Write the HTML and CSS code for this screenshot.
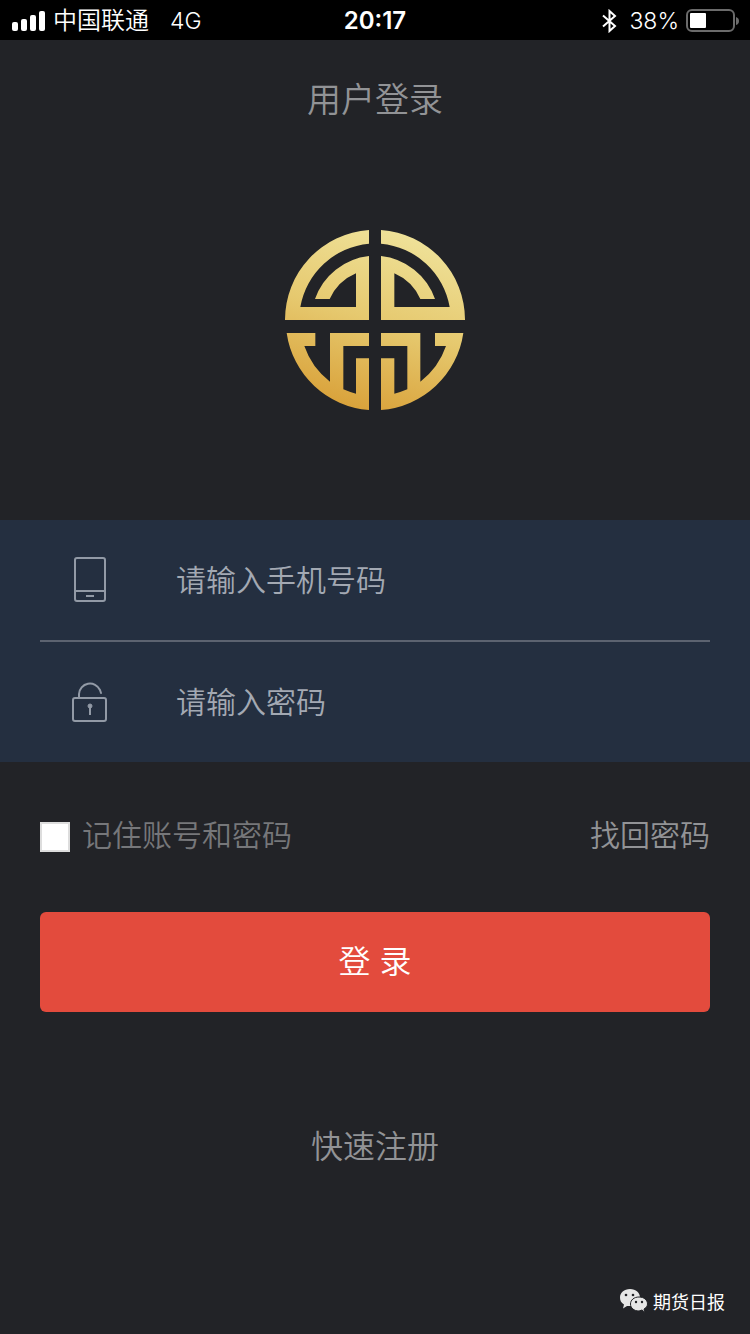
FILE: index.html
```html
<!DOCTYPE html>
<html lang="zh-CN">
<head>
    <meta charset="UTF-8">
    <meta name="viewport" content="width=device-width, initial-scale=1.0">
    <title>用户登录</title>
    <link rel="stylesheet" href="styles.css">
</head>
<body>
    <div class="status-bar">
        <div class="status-left">
            <svg viewBox="0 0 34 20" width="34" height="20" fill="#fff">
                <rect x="0" y="11" width="6" height="9" rx="2"/>
                <rect x="9" y="8" width="6" height="12" rx="2"/>
                <rect x="18" y="4" width="6" height="16" rx="2"/>
                <rect x="27" y="0" width="6" height="20" rx="2"/>
            </svg>
            <span>中国联通</span>
            <span class="network">4G</span>
        </div>
        <div class="time">20:17</div>
        <div class="status-right">
            <svg viewBox="0 0 16 24" width="16" height="24" fill="none" stroke="#fff" stroke-width="2">
                <path d="M2 6.500l12 10.500-5.500 5V2l5.500 5L2 17.500"/>
            </svg>
            <span class="percent">38%</span>
            <svg viewBox="0 0 54 24" width="54" height="24">
                <rect x="1" y="1" width="47" height="21" rx="5" fill="none" stroke="#6b6b6b" stroke-width="2"/>
                <rect x="4" y="4" width="16" height="15" rx="1" fill="#fff"/>
                <path d="M50 8q3 1 3 4t-3 4z" fill="#6b6b6b"/>
            </svg>
        </div>
    </div>
    <h1 class="title">用户登录</h1>
    <div class="logo">
        <svg viewBox="0 0 540 540" width="180" height="180">
            <defs>
                <linearGradient id="gold" gradientUnits="userSpaceOnUse" x1="350" y1="0" x2="190" y2="540">
                    <stop offset="0" stop-color="#efe29a"/>
                    <stop offset="0.5" stop-color="#e6c96f"/>
                    <stop offset="1" stop-color="#d9a139"/>
                </linearGradient>
            </defs>
            <g fill="url(#gold)">
                <path d="M0 270A270 270 0 0 1 252 0V41A230 230 0 0 0 46 231H213V130A152 152 0 0 0 134 207H90A194 194 0 0 1 252 78V270Z"/>
                <path d="M540 270A270 270 0 0 0 288 0V41A230 230 0 0 1 494 231H328V130A152 152 0 0 1 406 207H450A194 194 0 0 0 288 78V270Z"/>
                <path d="M5 309H91V348H58A228 228 0 0 0 135 455V309H252V348H175V478A228 228 0 0 0 213 491V385H252V540A270 270 0 0 1 5 309Z"/>
                <path d="M535 309H450V348H483A228 228 0 0 1 406 455V309H288V348H367V478A228 228 0 0 1 328 491V385H288V540A270 270 0 0 0 535 309Z"/>
            </g>
        </svg>
    </div>
    <form>
        <div class="fields">
            <div class="field">
                <label for="phone" aria-label="手机号码">
                    <svg viewBox="0 0 36 46" width="36" height="46" fill="none" stroke="#929aa6" stroke-width="2">
                        <rect x="3" y="1" width="30" height="43" rx="2"/>
                        <path d="M3 34h30M14 39h8"/>
                    </svg>
                </label>
                <input type="tel" id="phone" placeholder="请输入手机号码">
            </div>
            <div class="field">
                <label for="password" aria-label="密码">
                    <svg viewBox="0 0 36 46" width="36" height="46" fill="none" stroke="#929aa6" stroke-width="2">
                        <rect x="1" y="19" width="33" height="23" rx="2"/>
                        <path d="M7 19v-4a11 11 0 0 1 21 -4l1 3" stroke-linecap="round"/>
                        <circle cx="18" cy="27" r="2" fill="#929aa6" stroke-width="1"/>
                        <path d="M18 27v9"/>
                    </svg>
                </label>
                <input type="password" id="password" placeholder="请输入密码">
            </div>
        </div>
        <div class="options">
            <input type="checkbox" id="remember">
            <label for="remember">记住账号和密码</label>
            <a href="#">找回密码</a>
        </div>
        <button type="button">登 录</button>
    </form>
    <a class="register" href="#">快速注册</a>
    <div class="account">
        <svg viewBox="0 0 28 24" width="28" height="24">
            <path d="M10 0C4 0 0 4 0 8.500c0 3 1 5 4 7l-1 4 4-2.500h3c6 0 10-4 10-8.500S16 0 10 0Z" fill="#e6e6e6"/>
            <path d="M19 8c-5 0-8.500 3-8.500 7s3.500 7 8.500 7l3-1 3 2.500-1-3.500c2-1 3.500-3 3.500-5 0-4-3.500-7-8.500-7Z" fill="#e6e6e6" stroke="#222327"/>
            <g fill="#222327">
                <circle cx="6" cy="6" r="1.300"/>
                <circle cx="13" cy="6" r="1.300"/>
                <circle cx="16" cy="13" r="1.200"/>
                <circle cx="22" cy="13" r="1.200"/>
            </g>
        </svg>
        <span>期货日报</span>
    </div>
</body>
</html>
```
FILE: styles.css
```css
* {
    box-sizing: border-box;
}
body {
    font-family: Inter, "Noto Sans CJK SC", sans-serif;
    font-weight: 350;
    margin: 0;
    min-height: 100vh;
    display: flex;
    flex-direction: column;
    background-color: #222327;
    color: #929396;
}
svg {
    display: block;
}
a {
    color: #929396;
    text-decoration: none;
}
.status-bar {
    display: grid;
    grid-template-columns: 1fr auto 1fr;
    align-items: center;
    height: 40px;
    padding: 0 10px;
    background-color: #000;
    color: #fff;
    font-size: 24px;
    line-height: 42px;
}
.status-left, .status-right {
    display: flex;
    align-items: center;
    gap: 7px;
}
.status-left {
    padding-left: 2px;
}
.status-right {
    justify-content: flex-end;
}
.network, .percent {
    font-size: 23px;
}
.network {
    margin-left: 14px;
}
.percent {
    margin-left: 5px;
}
.time {
    font-weight: 600;
}
.title {
    margin: 0;
    font-size: 34px;
    font-weight: 350;
    line-height: 120px;
    text-align: center;
}
.logo {
    display: flex;
    justify-content: center;
    padding: 70px 0 110px;
}
.fields {
    padding: 0 40px;
    background-color: #242f40;
}
.field {
    display: flex;
    align-items: center;
    height: 120px;
    padding-left: 32px;
    gap: 68px;
}
.field + .field {
    height: 122px;
    border-top: 2px solid #5c6370;
}
.field input {
    flex: 1;
    min-width: 0;
    height: 60px;
    padding: 0;
    border: none;
    outline: none;
    background: none;
    color: #a3a9b3;
    font: inherit;
    font-size: 30px;
}
.field input::placeholder {
    color: #a3a9b3;
    opacity: 1;
}
.options {
    display: flex;
    align-items: center;
    gap: 12px;
    height: 150px;
    padding: 0 40px;
    font-size: 30px;
    line-height: 40px;
}
.options label {
    color: #76777a;
}
.options label, .options a {
    padding-bottom: 4px;
}
.options input {
    appearance: none;
    width: 30px;
    height: 30px;
    margin: 0;
    border: 2px solid #ddd;
    background-color: #fff;
}
.options input:checked {
    background-color: #e34b3d;
}
.options a {
    margin-left: auto;
}
button {
    display: block;
    width: calc(100% - 80px);
    height: 100px;
    margin: 0 40px;
    padding: 0 0 6px;
    border: none;
    border-radius: 6px;
    background-color: #e34b3d;
    color: #fff;
    font: inherit;
    font-size: 32px;
    cursor: pointer;
}
.register {
    align-self: center;
    margin-top: 110px;
    font-size: 32px;
    line-height: 50px;
}
.account {
    display: flex;
    align-items: center;
    align-self: flex-end;
    gap: 5px;
    margin-top: auto;
    padding: 0 25px 20px 0;
    color: #fff;
    font-size: 18px;
    font-weight: 400;
}
```
